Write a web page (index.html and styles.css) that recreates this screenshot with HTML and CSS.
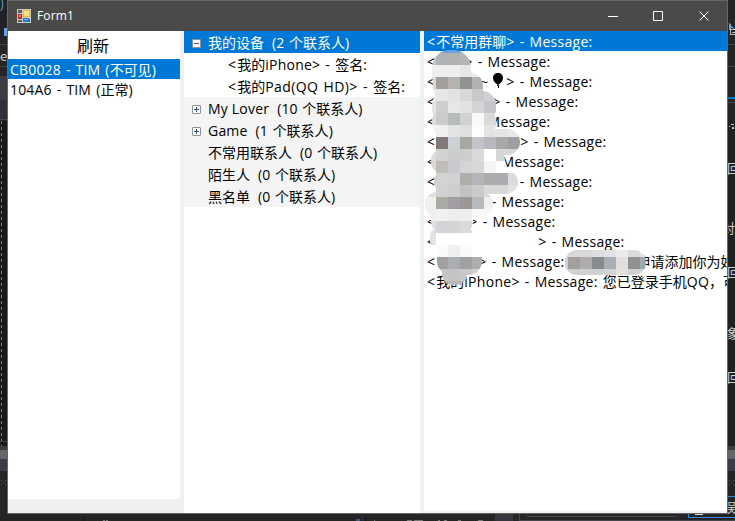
FILE: index.html
```
<!DOCTYPE html>
<html lang="zh-CN"><head><meta charset="utf-8"><title>Form1</title><link rel="stylesheet" href="styles.css"></head>
<body>
<svg class="backdrop" width="735" height="521" shape-rendering="crispEdges">
<rect width="735" height="521" fill="#252527"/>
<rect width="8" height="44" fill="#222226"/><path d="M0 44.500h8M0 66.500h8" stroke="#424246"/>
<rect y="76" width="8" height="24" fill="#3b3b42"/><rect y="100" width="8" height="19" fill="#303037"/>
<rect y="121" width="7" height="325" fill="#19191a"/><path d="M1.500 121V446" stroke="#808080" stroke-dasharray="3 3"/>
<path d="M0 119.500h8M0 441.500h8" stroke="#48484c"/><path d="M4 28h4v8h-4z" fill="#60a5df"/>
<rect y="446" width="735" height="4" fill="#3c3c43"/><rect y="450" width="735" height="9" fill="#666"/><rect y="459" width="735" height="12" fill="#3c3c46"/>
<rect x="728" y="121" width="7" height="325" fill="#202021"/>
<path d="M728 44.500h7M728 66.500h7M728 102.500h7" stroke="#444448"/><path d="M728 97h7v2h-7z" fill="#007acc"/>
<path d="M729 22v8l2-2 3 1z" fill="#60a5df"/><path d="M735 29.500h-4.500v5h4.500M732 32.500h3" fill="none" stroke="#bbb"/>
<path d="M729 126h1v1h-1zM731 124h3v1h-3zM732 127h2v2h-2z" fill="#ccc"/>
<path d="M1 480h1v1H1zM5 480h1v1H5zM3 482h1v1H3zM1 484h1v1H1zM5 484h1v1H5zM729 480h1v1h-1zM733 480h1v1h-1zM731 482h1v1h-1zM729 484h1v1h-1zM733 484h1v1h-1z" fill="#555"/>
<path d="M83.500 517v4M365.500 517v4" stroke="#101010"/><rect x="495" y="514" width="18" height="7" fill="#35353d"/>
<path d="M519.500 514v6H735M527 516.500h150" fill="none" stroke="#46464a"/>
<path d="M735 496.500h-7M688.500 514v3H735" fill="none" stroke="#3288d8"/><path d="M695 514h8" stroke="#ddd" stroke-width="2"/>
<path d="M103 520h2v1h-2zM106 520h2v1h-2zM374 520h1v1h-1zM407 520h5v1h-5zM414 520h9v1h-9zM438 520h2v1h-2zM444 520h3v1h-3zM458 520h3v1h-3zM478 520h5v1h-5z" fill="#777"/><path d="M356 519h4v2h-4z" fill="#375e80"/>
</svg>
<div class="edge-text l1">)</div><div class="edge-text l2">e</div>
<div class="edge-text r1">回</div><div class="edge-text r2">对</div><div class="edge-text r3">回</div><div class="edge-text r4">象</div><div class="edge-text r5">回</div><div class="edge-text r6">误</div>
<main class="window">
<header class="titlebar">
<svg class="app-icon" width="14" height="14" shape-rendering="crispEdges"><path d="M0 0h14v14H0z" fill="#c9c9c9"/><path d="M1 1h4v3H1zM1 11h4v2H1zM12 10h1v3h-1z" fill="#5c5c5c"/><path d="M6 1h7v7H6z" fill="#f3b92c"/><path d="M7 2h5v5H7z" fill="#ffe06e"/><path d="M1 5h4v5H1z" fill="#c72a18"/><path d="M2 6h2v2H2z" fill="#ef7868"/><path d="M6 9h6v4H6z" fill="#2878d0"/><path d="M7 10h4v1H7z" fill="#82baf3"/></svg>
<span class="title">Form1</span>
<svg class="controls" width="120" height="30" fill="none" stroke="#fff"><path d="M0 15.500h10M45.500 10.500h9v9h-9z"/><path d="M91.500 10.500l9 9M100.500 10.500l-9 9"/></svg>
</header>
<section class="content">
<div class="accounts"><div class="refresh">刷新</div><div class="row selected"><i>CB0028 - TIM (</i>不可见<i>)</i></div><div class="row"><i>104A6 - TIM (</i>正常<i>)</i></div></div>
<div class="contacts">
<div class="group selected"><b class="box"><b class="sign"></b></b>我的设备<span class="count"><i>(2 </i>个联系人<i>)</i></span></div>
<div class="child"><i>&lt;</i>我的<i>iPhone&gt; - </i>签名<i>:</i></div>
<div class="child"><i>&lt;</i>我的<i class="pad">Pad(QQ HD)&gt; - </i>签名<i>:</i></div>
<div class="group"><b class="box"><b class="sign plus"></b></b><i class="latin">My Lover</i><span class="count"><i>(10 </i>个联系人<i>)</i></span></div>
<div class="group"><b class="box"><b class="sign plus"></b></b><i class="latin">Game</i><span class="count"><i>(1 </i>个联系人<i>)</i></span></div>
<div class="group"><b class="box"></b>不常用联系人<span class="count"><i>(0 </i>个联系人<i>)</i></span></div>
<div class="group"><b class="box"></b>陌生人<span class="count"><i>(0 </i>个联系人<i>)</i></span></div>
<div class="group"><b class="box"></b>黑名单<span class="count"><i>(0 </i>个联系人<i>)</i></span></div>
</div>
<div class="messages">
<div class="msg selected"><i>&lt;</i>不常用群聊<i>&gt; - Message:</i></div>
<div class="msg"><i>&lt;</i><span class="name" style="width:28px"></span><i>&gt; - Message:</i></div>
<div class="msg"><i>&lt;</i><span class="name" style="width:70px"><span class="tilde">~</span><svg class="balloon" width="12" height="17"><path d="M6 1C3 1 1 3 1 6c0 3 2 5 4.500 6.500L5 14h1v2h1v-2l-.500-1.500C9 11 11 9 11 6c0-3-2-5-5-5z"/></svg></span><i>&gt; - Message:</i></div>
<div class="msg"><i>&lt;</i><span class="name" style="width:56px"></span><i>&gt; - Message:</i></div>
<div class="msg"><i>&lt;</i><span class="name" style="width:28px"></span><i>&gt; - Message:</i></div>
<div class="msg"><i>&lt;</i><span class="name" style="width:84px"></span><i>&gt; - Message:</i></div>
<div class="msg"><i>&lt;</i><span class="name" style="width:42px"></span><i>&gt; - Message:</i></div>
<div class="msg"><i>&lt;</i><span class="name" style="width:70px"></span><i>&gt; - Message:</i></div>
<div class="msg"><i>&lt;</i><span class="name" style="width:42px"></span><i>&gt; - Message:</i></div>
<div class="msg"><i>&lt;</i><span class="name" style="width:33px"></span><i>&gt; - Message:</i></div>
<div class="msg"><i>&lt;</i><span class="name" style="width:102px"></span><i>&gt; - Message:</i></div>
<div class="msg"><i>&lt;</i><span class="name" style="width:42px"></span><i>&gt; - Message:</i><span class="name" style="width:72px"></span>申请添加你为好</div>
<div class="msg"><i>&lt;</i>我的<i>iPhone&gt; - Message: </i>您已登录手机<i>QQ</i>，可</div>
<svg class="mosaic" width="303" height="480" viewBox="424 31 303 480">
<defs><clipPath id="brush">
<rect x="432" y="50" width="39" height="44" rx="18"/><rect x="433" y="72" width="50" height="30" rx="14"/><rect x="432" y="91" width="64" height="32" rx="14"/><rect x="432" y="108" width="64" height="28" rx="13"/><rect x="434" y="129" width="86" height="26" rx="13"/><rect x="431" y="149" width="74" height="24" rx="11"/><rect x="434" y="170" width="84" height="24" rx="12"/><rect x="425" y="192" width="68" height="25" rx="12"/><rect x="431" y="208" width="42" height="25" rx="11"/><rect x="430" y="227" width="44" height="24" rx="10"/><rect x="437" y="245" width="45" height="30" rx="14"/><rect x="442" y="262" width="25" height="23" rx="11"/><rect x="436" y="70" width="34" height="180"/>
<rect x="565" y="250" width="81" height="25" rx="12"/></clipPath></defs>
<g id="cells" clip-path="url(#brush)" shape-rendering="crispEdges"></g></svg>
</div>
</section>
</main>
<script src="mosaic.js"></script>
</body></html>
```
FILE: mosaic.js
```
// Each string is one 12px row of cells, starting at the given x and y.
const rows = [
  [424, 41, '5a9fe0 6aa5df 6aa5df 6aa5df 6aa5df'],
  [424, 53, 'c8c8c8 b1b2b5 b2b2b2 b5b5b5 dcdce0'],
  [424, 65, 'eeeeee eeeeef eeeeef e6e6e6 ececee ececee'],
  [424, 77, 'd8d8d8 a39e9b b5b2b0 8f9390 b1b1b1 b5b6bb b5b6bb'],
  [424, 89, 'eeeeee e8e6e6 e2e2e2 d6d9d9 c8c8c8 cfcfd4 cfcfd4'],
  [424, 101, 'e4e4e4 cecece e7e8e6 e2e2e0 d4d4d4 c5c6ca c5c6ca'],
  [424, 113, 'dddddd cbcbcb b8babc cfd3d6 f8f8f8 dadadc dadadc'],
  [424, 125, 'f4f4f4 f0f0f0 e2e4e4 dfdfdf fdfdfd e4e4e4 e4e4e4 e8e8e8'],
  [424, 137, 'ffffff 827a78 cdd2d6 a8a8a3 c4c4c8 b8b9be a9a9aa 9c9fa6'],
  [424, 149, 'dddddd d2d2d2 cccccc cdcdcd dadada ffffff d6d6d6 d6d6d6'],
  [424, 161, 'd8d8d8 c0bcb8 c9cad0 d4d4d4 d8d8da f4f4f4 ffffff'],
  [424, 173, 'd0d0d0 d4d4d4 d1d1d1 aeafab b3b5b6 abacab aaacaf dcdcdc'],
  [424, 185, 'e0e0e0 d2d2d2 cecece c2c2c2 cacaca d8d8d8 d8d8d8 e4e4e4'],
  [424, 197, 'f0f0f0 aaa9a2 a29ca5 9c9697 b5bbbc f0f0f0'],
  [424, 209, 'f0f0f0 f2f2f2 eeeeee eeeeee f8f8f8 f8f8f8'],
  [424, 221, 'e0e0e0 d4d4d8 d4d4d4 dadada ffffff'],
  [424, 233, 'e2e2e2 ffffff ffffff ffffff ffffff'],
  [424, 245, 'ffffff fafafa efeff0 fafafa ffffff'],
  [424, 257, 'c0c0c0 a39f9f acadb0 9ea3a2 b0adae c0c0c0'],
  [424, 269, 'dddddd c5c5c5 c4c4c6 c8c8c8 d0d0d0'],
  [424, 281, 'b8b8bb b8b8bb b8b8bb b8b8bb'],
  [556, 245, 'd8d8d8 d8d8d8 d8d8d8 dededf e2e2e2 ececec dcdcdc e4e4e4'],
  [556, 257, 'cfcfcf a39f9d afacac 888c8c aaadb4 e2dedd 8f9190 9faab0'],
  [556, 269, 'd0d0d0 d0d0d0 d2d2d2 d0d0d0 d4d4d4 e4e0e0 d0d0d0 d0d4d8'],
];
const cells = document.getElementById('cells');
for (const [x, y, colours] of rows) {
  colours.split(' ').forEach((colour, i) => {
    const r = document.createElementNS('http://www.w3.org/2000/svg', 'rect');
    r.setAttribute('x', x + i * 12);
    r.setAttribute('y', y);
    r.setAttribute('width', 12);
    r.setAttribute('height', 12);
    r.setAttribute('fill', '#' + colour);
    cells.appendChild(r);
  });
}
for (const [x, y, w, h] of [[472, 113, 18, 18], [472, 155, 31, 10], [497, 173, 21, 18], [472, 193, 18, 20]]) {
  const r = document.createElementNS('http://www.w3.org/2000/svg', 'rect');
  r.setAttribute('x', x);
  r.setAttribute('y', y);
  r.setAttribute('width', w);
  r.setAttribute('height', h);
  r.setAttribute('fill', '#fff');
  cells.parentNode.insertBefore(r, cells);
}
```
FILE: styles.css
```
*{box-sizing:border-box}
body{margin:0;width:735px;height:521px;overflow:hidden;position:relative;font:14px/20px "Open Sans","Noto Sans CJK SC",sans-serif;color:#000}
i{font-style:normal;letter-spacing:.23px;word-spacing:1.2px}
.backdrop{position:absolute;left:0;top:0}
.edge-text{position:absolute;width:7px;height:18px;overflow:hidden;color:#ccc;font:13px/18px "Noto Sans CJK SC",sans-serif}
.l1{left:0;top:-5px;color:#5ba6df}.l2{left:0;top:47px}
.r1,.r2,.r3,.r4,.r5,.r6{left:728px;text-indent:-1px}.r1{top:159px}.r2{top:219px;text-indent:-6px}.r3{top:263px}.r4{top:324px}.r5{top:368px}.r6{top:498px;text-indent:-5px}
.window{position:relative;margin-left:7px;width:721px;height:514px;border:1px solid #666;background:#f0f0f0;display:flex;flex-direction:column}
.titlebar{height:30px;flex:none;background:#4c4a48;color:#fff;display:flex;align-items:center;padding:0 0 0 9px;font-size:12px}
.title{margin-left:6px;letter-spacing:.15px}
.controls{margin-left:auto;margin-right:-1px}
.content{display:flex;flex:1;min-height:0;gap:4px}
.accounts{width:172px;height:468px;background:#fff}
.refresh{height:28px;text-align:center;font-size:16px;line-height:30px;padding-right:2px}
.row{height:20px;line-height:22px;padding-left:2px;white-space:pre}
.row i{letter-spacing:.17px}
.selected,.group.selected{background:#0078d7;color:#fff}
.contacts{width:236px;background:#fff}
.group,.child{height:22px;line-height:23px;white-space:pre;display:flex}
.group{background:#f4f4f4;padding-left:8px}
.child{padding-left:44px}
.child i:first-child{margin-right:1px}
.pad{letter-spacing:.4px}
.latin{letter-spacing:.2px;word-spacing:0}
.box{width:16px;height:22px;padding-top:8px;flex:none}
.sign{display:block;width:9px;height:9px;border:1px solid #919191;border-radius:1px;background:linear-gradient(#34509c,#34509c) center/5px 1px no-repeat,#fafafa}
.sign.plus{background:linear-gradient(#34509c,#34509c) center/5px 1px no-repeat,linear-gradient(#34509c,#34509c) center/1px 5px no-repeat,#fafafa}
.count{margin-left:8px}
.count i{letter-spacing:.15px;word-spacing:.8px}
.messages{width:303px;height:480px;background:#fff;overflow:hidden;position:relative}
.msg{height:20px;line-height:22px;white-space:pre;padding-left:3px;display:flex}
.msg i:first-child{margin-right:1px}
.msg i{letter-spacing:.28px}
.name{flex:none;display:flex;justify-content:flex-end}
.tilde{margin-right:2px}
.balloon{margin:1px 2px 0 2px}
.mosaic{position:absolute;left:0;top:0}
```
